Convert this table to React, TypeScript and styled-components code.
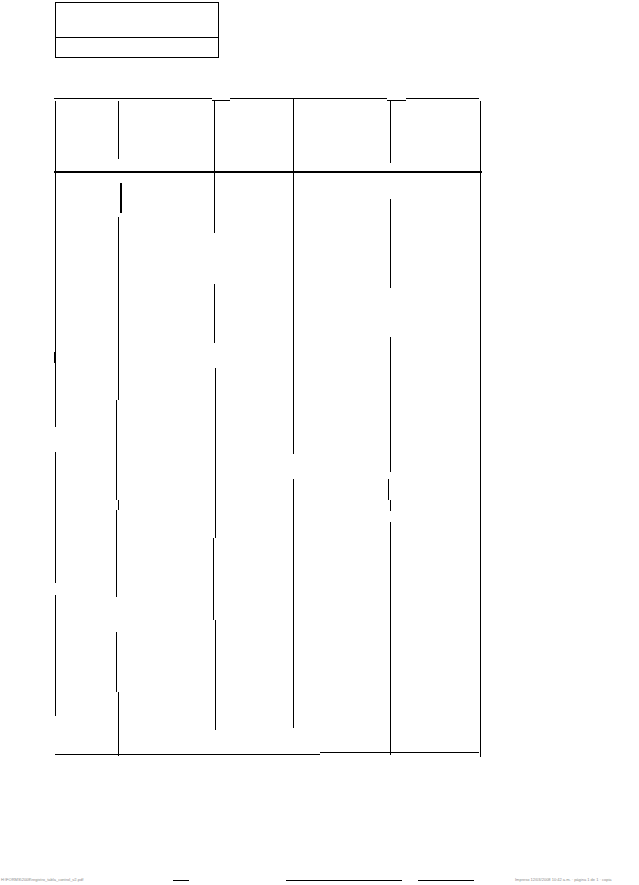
import styled, { createGlobalStyle } from "styled-components";

type Seg = { from: number; to: number; dx?: number; w?: number };

const GlobalStyle = createGlobalStyle`
  html, body {
    margin: 0;
    padding: 0;
    background: #ffffff;
  }
  body {
    font-family: "Liberation Sans", Arial, sans-serif;
    color: #000;
  }
`;

const INK = "#000";

// column widths between the vertical rules (rules are 1px)
const CELL_WIDTHS = [62, 95, 78, 96, 89];

// header rules, absolute y on the page
const HEADER_TOP = 99;
const HEADER_RULES: Seg[][] = [
  [{ from: 101, to: 171 }],
  [{ from: 101, to: 159 }],
  [{ from: 100, to: 171 }],
  [{ from: 99, to: 171 }],
  [{ from: 100, to: 163 }],
  [{ from: 101, to: 171 }],
];

// body rules (scan has broken / shifted strokes)
const BODY_TOP = 173;
const BODY_RULES: Seg[][] = [
  [
    { from: 173, to: 352 },
    { from: 352, to: 363, dx: -1, w: 2 },
    { from: 363, to: 427 },
    { from: 452, to: 583 },
    { from: 595, to: 716 },
  ],
  [
    { from: 183, to: 213, dx: 2, w: 2 },
    { from: 217, to: 400 },
    { from: 400, to: 500, dx: -2 },
    { from: 500, to: 510 },
    { from: 510, to: 597, dx: -2 },
    { from: 632, to: 692, dx: -2 },
    { from: 692, to: 756 },
  ],
  [
    { from: 173, to: 233 },
    { from: 284, to: 343 },
    { from: 368, to: 538, dx: 1 },
    { from: 538, to: 620, dx: -1 },
    { from: 620, to: 730, dx: 1 },
  ],
  [
    { from: 173, to: 454 },
    { from: 479, to: 728 },
  ],
  [
    { from: 199, to: 288 },
    { from: 337, to: 472 },
    { from: 479, to: 500, dx: -2 },
    { from: 500, to: 511 },
    { from: 522, to: 755 },
  ],
  [{ from: 173, to: 757 }],
];

// top edge of the table: segments with small dropped notches
const TOP_EDGE = [
  { w: 158, dy: 0, dx: -1 },
  { w: 18, dy: 2, dx: 0 },
  { w: 157, dy: 0, dx: 0 },
  { w: 19, dy: 2, dx: 0 },
  { w: 73, dy: 0, dx: 0 },
];

const BOTTOM_EDGE = [
  { w: 265, dy: 2, dx: 0 },
  { w: 159, dy: 0, dx: 0 },
];

const Page = styled.div`
  width: 639px;
  height: 885px;
  box-sizing: border-box;
  padding-top: 2px;
  display: flex;
  flex-direction: column;
  overflow: hidden;
`;

const TopBox = styled.div`
  margin-left: 55px;
  width: 164px;
  box-sizing: border-box;
  border: 1px solid ${INK};
  display: flex;
  flex-direction: column;
`;

const TopBoxRow = styled.div<{ $h: number; $last?: boolean }>`
  height: ${(p) => p.$h}px;
  border-bottom: ${(p) => (p.$last ? "none" : `1px solid ${INK}`)};
`;

const Table = styled.div`
  margin: 40px 0 0 55px;
  width: 426px;
  display: flex;
  flex-direction: column;
`;

const EdgeRow = styled.div<{ $h: number }>`
  display: flex;
  align-items: flex-start;
  height: ${(p) => p.$h}px;
  overflow: visible;
`;

const EdgeSeg = styled.div<{ $w: number; $dy: number; $dx: number }>`
  flex: none;
  width: ${(p) => p.$w}px;
  height: 1px;
  margin-top: ${(p) => p.$dy}px;
  margin-left: ${(p) => p.$dx}px;
  background: ${INK};
`;

const RuleRow = styled.div<{ $h: number }>`
  display: flex;
  height: ${(p) => p.$h}px;
  overflow: visible;
`;

const VRule = styled.div`
  flex: none;
  width: 1px;
  display: flex;
  flex-direction: column;
  overflow: visible;
`;

const VSeg = styled.div<{ $h: number; $gap: number; $dx: number; $w: number }>`
  flex-shrink: 0;
  width: ${(p) => p.$w}px;
  height: ${(p) => p.$h}px;
  margin-top: ${(p) => p.$gap}px;
  transform: translateX(${(p) => p.$dx}px);
  background: ${INK};
`;

const Cell = styled.div<{ $w: number }>`
  flex: none;
  width: ${(p) => p.$w}px;
`;

const ThickRule = styled.div`
  margin-left: -1px;
  width: 428px;
  height: 2px;
  background: ${INK};
`;

const Footer = styled.div`
  margin-top: 122px;
  height: 6px;
  display: flex;
  align-items: flex-start;
`;

const FooterText = styled.span<{ $ml: number; $w: number }>`
  flex: none;
  margin-left: ${(p) => p.$ml}px;
  width: ${(p) => p.$w}px;
  font-size: 4px;
  line-height: 6px;
  color: #8a8a8a;
  white-space: nowrap;
`;

const FooterLine = styled.div<{ $ml: number; $w: number }>`
  flex: none;
  margin-left: ${(p) => p.$ml}px;
  margin-top: 3px;
  width: ${(p) => p.$w}px;
  height: 1px;
  background: ${INK};
`;

function Rule({ top, segs }: { top: number; segs: Seg[] }) {
  let cursor = top;
  return (
    <VRule>
      {segs.map((s, i) => {
        const gap = s.from - cursor;
        cursor = s.to;
        return (
          <VSeg
            key={i}
            $gap={gap}
            $h={s.to - s.from}
            $dx={s.dx ?? 0}
            $w={s.w ?? 1}
          />
        );
      })}
    </VRule>
  );
}

function Rules({ top, height, rules }: { top: number; height: number; rules: Seg[][] }) {
  return (
    <RuleRow $h={height}>
      {rules.map((segs, i) => (
        <div key={i} style={{ display: "contents" }}>
          <Rule top={top} segs={segs} />
          {i < CELL_WIDTHS.length && <Cell $w={CELL_WIDTHS[i]} />}
        </div>
      ))}
    </RuleRow>
  );
}

export default function App() {
  return (
    <>
      <GlobalStyle />
      <Page>
        <TopBox>
          <TopBoxRow $h={34} />
          <TopBoxRow $h={19} $last />
        </TopBox>

        <Table>
          <EdgeRow $h={1}>
            {TOP_EDGE.map((s, i) => (
              <EdgeSeg key={i} $w={s.w} $dy={s.dy} $dx={s.dx} />
            ))}
          </EdgeRow>
          <Rules top={HEADER_TOP} height={72} rules={HEADER_RULES} />
          <ThickRule />
          <Rules top={BODY_TOP} height={579} rules={BODY_RULES} />
          <EdgeRow $h={3}>
            {BOTTOM_EDGE.map((s, i) => (
              <EdgeSeg key={i} $w={s.w} $dy={s.dy} $dx={s.dx} />
            ))}
          </EdgeRow>
        </Table>

        <Footer>
          <FooterText $ml={1} $w={90}>H:\FORMS\2008\registro_tabla_control_v2.pdf</FooterText>
          <FooterLine $ml={82} $w={16} />
          <FooterLine $ml={97} $w={116} />
          <FooterLine $ml={16} $w={56} />
          <FooterText $ml={41} $w={121}>Impreso 12/03/2008 10:42 a.m. · página 1 de 1 · copia</FooterText>
        </Footer>
      </Page>
    </>
  );
}
